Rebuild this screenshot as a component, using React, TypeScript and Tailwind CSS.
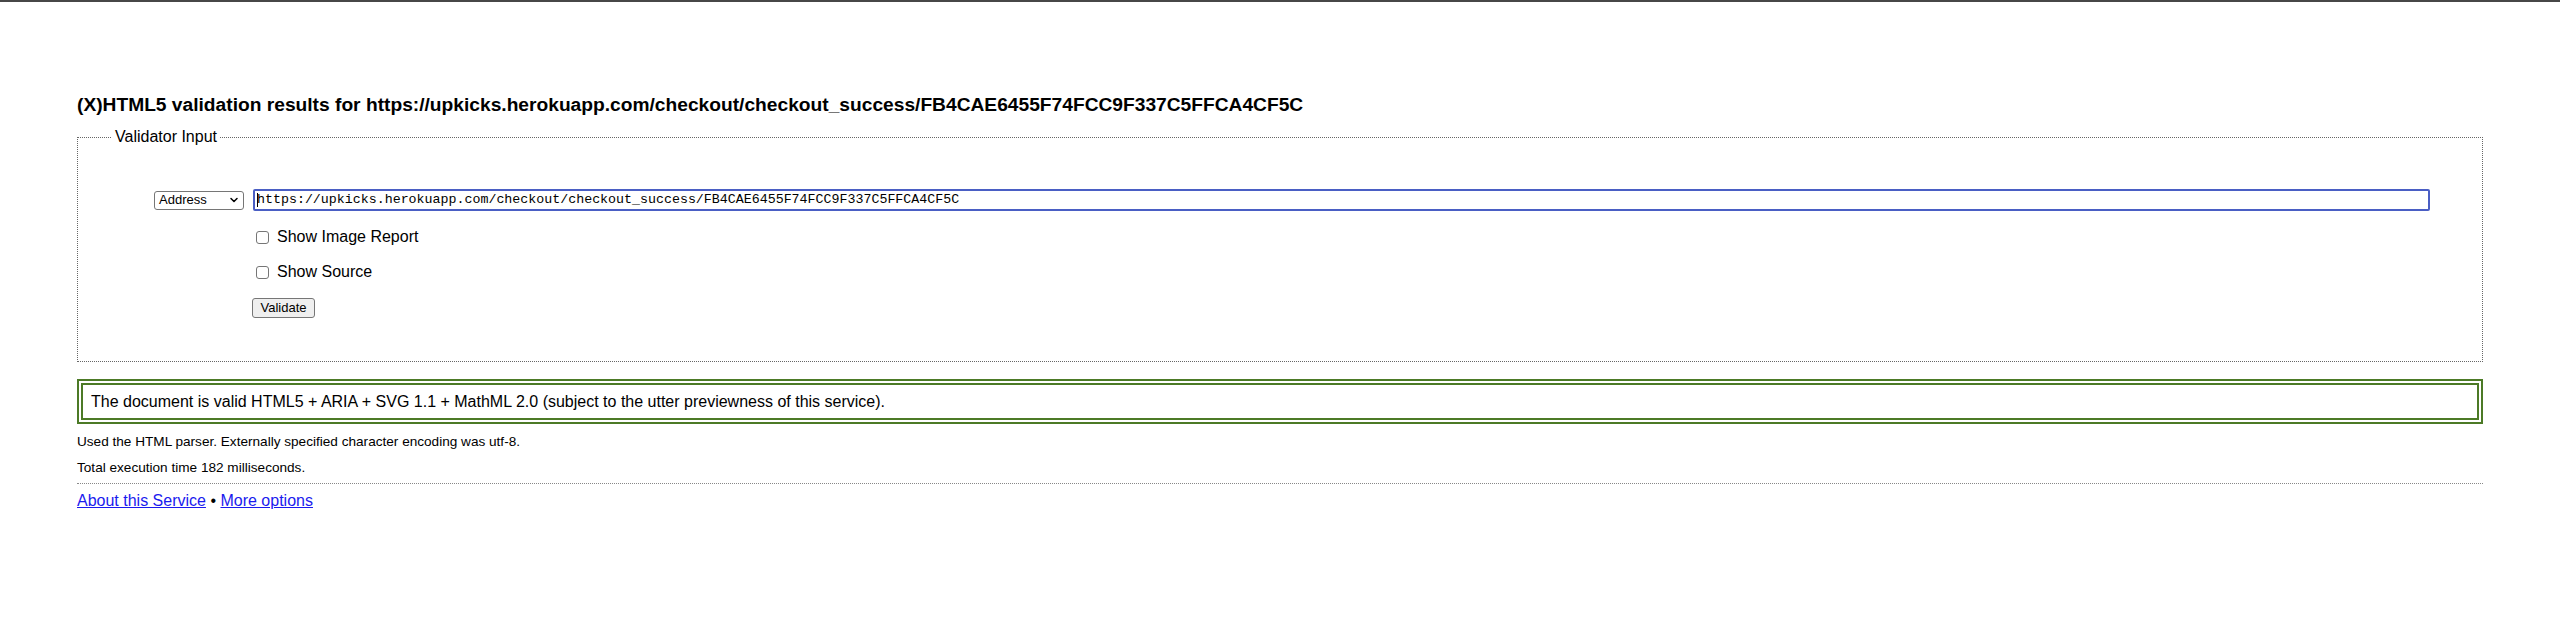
import React from 'react';
import { ChevronDown } from 'lucide-react';

const URL =
    'https://upkicks.herokuapp.com/checkout/checkout_success/FB4CAE6455F74FCC9F337C5FFCA4CF5C';

const CheckRow = ({ label }: { label: string }) => (
    <label className="flex items-center h-[20px]">
        <span className="ml-[3px] w-[13px] h-[13px] border border-[#767676] rounded-[3px] bg-white"></span>
        <span className="ml-[8px] text-[16px]">{label}</span>
    </label>
);

export default function App() {
    return (
        <div className="min-h-[642px] bg-white text-black font-['Liberation_Sans',Arial,sans-serif]">
            <div className="h-[2px] bg-[#474747]"></div>
            <div className="px-[77px] pt-[91px]">
                <h1 className="text-[19.2px] font-bold leading-[23px]">
                    (X)HTML5 validation results for {URL}
                </h1>

                <fieldset className="mt-[12px] border border-dotted border-[#666] px-[34px] pb-[42px]">
                    <legend className="px-[3px] text-[16px] leading-[18px]">
                        Validator Input
                    </legend>
                    <div className="pt-[43px] pl-[42px] pr-[18px]">
                        <div className="flex items-center gap-[9px]">
                            <div className="w-[90px] h-[19px] border border-[#767676] rounded-[3px] flex items-center justify-between pl-[4px] pr-[3px] text-[13px]">
                                <span>Address</span>
                                <ChevronDown
                                    className="w-[12px] h-[12px]"
                                    strokeWidth={3}
                                />
                            </div>
                            <div className="flex-1 h-[22px] border-2 border-[#4a5ec4] rounded-[2px] flex items-center pl-[2px]">
                                <span className="w-px h-[14px] bg-black"></span>
                                <span className="font-['Liberation_Mono',monospace] text-[13.3px] -ml-px">
                                    {URL}
                                </span>
                            </div>
                        </div>
                        <div className="pl-[99px] flex flex-col">
                            <div className="mt-[16px]">
                                <CheckRow label="Show Image Report" />
                            </div>
                            <div className="mt-[15px]">
                                <CheckRow label="Show Source" />
                            </div>
                            <div className="mt-[13px]">
                                <button className="h-[20px] w-[63px] -ml-px border border-[#767676] rounded-[3px] bg-[#efefef] text-[13px] leading-none">
                                    Validate
                                </button>
                            </div>
                        </div>
                    </div>
                </fieldset>

                <div className="mt-[17px] border-[6px] border-double border-[#4c7a26] px-[8px] h-[45px] flex items-center">
                    <p className="text-[16px]">
                        The document is valid HTML5 + ARIA + SVG 1.1 + MathML
                        2.0 (subject to the utter previewness of this service).
                    </p>
                </div>

                <p className="mt-[10px] text-[13.6px] leading-[16px]">
                    Used the HTML parser. Externally specified character
                    encoding was utf-8.
                </p>
                <p className="mt-[10px] text-[13.6px] leading-[16px]">
                    Total execution time 182 milliseconds.
                </p>
                <div className="mt-[7px] border-t border-dotted border-[#888]"></div>
                <div className="mt-[7px] text-[16px] leading-[19px]">
                    <a className="text-[#1a1aee] underline" href="#">
                        About this Service
                    </a>{' '}
                    •{' '}
                    <a className="text-[#1a1aee] underline" href="#">
                        More options
                    </a>
                </div>
            </div>
        </div>
    );
}
